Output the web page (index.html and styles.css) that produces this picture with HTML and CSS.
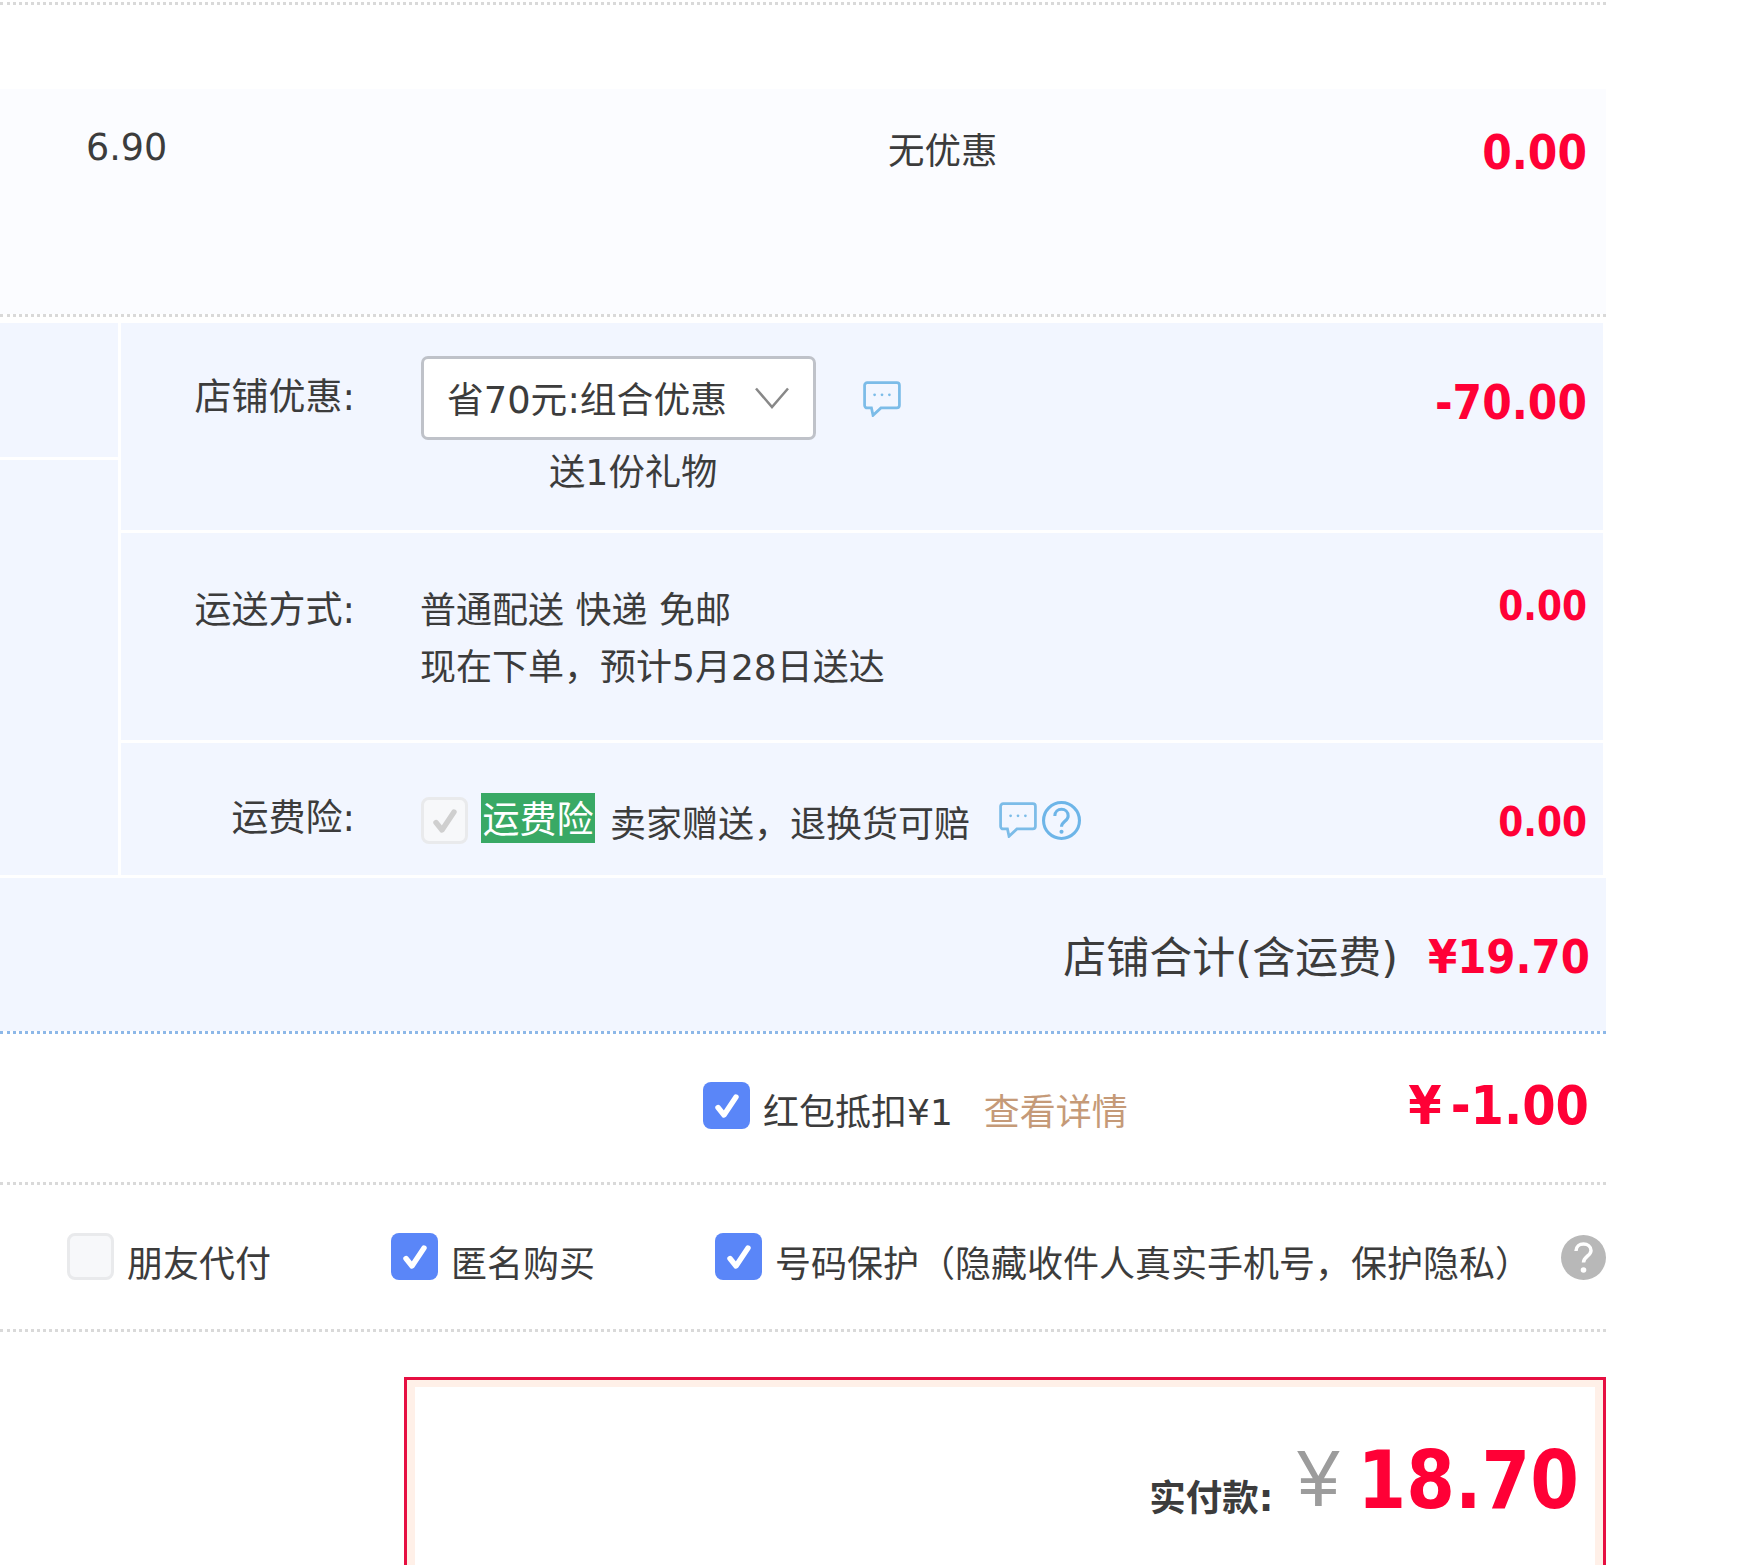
FILE: index.html
```html
<!DOCTYPE html>
<html lang="zh-CN">
<head>
<meta charset="utf-8">
<title>确认订单</title>
<link rel="stylesheet" href="styles.css">
</head>
<body>
<main class="order">
  <div class="rule rule-top"></div>
  <section class="item-row">
    <span class="unit-price">6.90</span>
    <span class="item-promo">无优惠</span>
    <span class="amount amount-lg item-amount">0.00</span>
  </section>
  <div class="rule rule-item"></div>

  <section class="store">
    <div class="store-side">
      <div class="side-a"></div>
      <div class="side-b"></div>
    </div>
    <div class="store-rows">
      <div class="srow srow-promo">
        <span class="label label-promo">店铺优惠:</span>
        <div class="promo-body">
          <div class="promo-top">
            <div class="select">
              <span class="select-text">省70元:组合优惠</span>
              <svg class="chevron" viewBox="0 0 34 22"><path d="M1 1.500 17 20 33 1.500"/></svg>
            </div>
            <svg class="chat chat-promo" viewBox="0 0 36 34"><use href="#chat"/></svg>
          </div>
          <div class="gift">送1份礼物</div>
        </div>
        <span class="amount amount-lg amount-promo">-70.00</span>
      </div>
      <div class="srow srow-ship">
        <span class="label">运送方式:</span>
        <div class="ship-body">
          <div>普通配送 快递 免邮</div>
          <div>现在下单，预计5月28日送达</div>
        </div>
        <span class="amount amount-ship">0.00</span>
      </div>
      <div class="srow srow-ins">
        <span class="label label-ins">运费险:</span>
        <div class="ins-body">
          <span class="check check-disabled">
            <svg viewBox="0 0 24 24"><path d="M6 13l4 5 8-12"/></svg>
          </span>
          <span class="badge">运费险</span>
          <span class="ins-text">卖家赠送，退换货可赔</span>
          <svg class="chat chat-ins" viewBox="0 0 36 34"><use href="#chat"/></svg>
          <svg class="help" viewBox="0 0 38 38">
            <circle cx="19" cy="19" r="17.500"/>
            <path d="M12.500 14.500C12.500 10.500 15.500 8 19 8s6.500 2.500 6.500 6.500c0 5-6.500 5.500-6.500 10.500"/>
            <circle class="help-dot" cx="19" cy="30" r="2"/>
          </svg>
        </div>
      </div>
    </div>
    <div class="ins-amount amount amount-ship">0.00</div>
  </section>

  <section class="store-total">
    <span class="total-label">店铺合计(含运费)</span>
    <span class="amount amount-total">¥19.70</span>
  </section>
  <div class="rule rule-blue"></div>

  <section class="coupon">
    <span class="check check-on">
      <svg viewBox="0 0 24 24"><path d="M6 13l4 5 8-12"/></svg>
    </span>
    <span class="coupon-text">红包抵扣¥1</span>
    <a class="detail-link">查看详情</a>
    <span class="amount amount-xl"><span class="yen">¥</span>-1.00</span>
  </section>
  <div class="rule"></div>

  <section class="options">
    <label class="opt opt-friend">
      <span class="check check-off"></span>
      <span class="opt-text">朋友代付</span>
    </label>
    <label class="opt opt-anon">
      <span class="check check-on"><svg viewBox="0 0 24 24"><path d="M6 13l4 5 8-12"/></svg></span>
      <span class="opt-text">匿名购买</span>
    </label>
    <label class="opt opt-phone">
      <span class="check check-on"><svg viewBox="0 0 24 24"><path d="M6 13l4 5 8-12"/></svg></span>
      <span class="opt-text">号码保护（隐藏收件人真实手机号，保护隐私）</span>
    </label>
    <svg class="q-icon" viewBox="0 0 45 45">
      <circle class="q-bg" cx="22.500" cy="22.500" r="22.500"/>
      <path class="q-mark" d="M15 16c0-4.500 3.500-7 7.500-7s7.500 2.500 7.500 6.500c0 5.500-7.500 6-7.500 12"/>
      <circle class="q-dot" cx="22.500" cy="35" r="2.800"/>
    </svg>
  </section>
  <div class="rule"></div>

  <section class="pay-wrap">
    <div class="pay-box">
      <div class="pay-inner">
        <span class="pay-label">实付款:</span>
        <span class="pay-currency">¥</span>
        <span class="pay-value">18.70</span>
      </div>
    </div>
  </section>
</main>
<svg class="defs" width="0" height="0">
  <symbol id="chat" viewBox="0 0 36 34">
    <path class="chat-line" d="M4 1.500h28a2.500 2.500 0 0 1 2.500 2.500v19a2.500 2.500 0 0 1-2.500 2.500H17l-7.500 7-1.500-7H4A2.500 2.500 0 0 1 1.500 23V4A2.500 2.500 0 0 1 4 1.500Z"/>
    <circle class="chat-dot" cx="11" cy="13" r="1.300"/>
    <circle class="chat-dot" cx="18" cy="13" r="1.300"/>
    <circle class="chat-dot" cx="25" cy="13" r="1.300"/>
  </symbol>
</svg>
</body>
</html>
```
FILE: styles.css
```css
* { box-sizing: border-box; }
html, body { margin: 0; padding: 0; background: #fff; }
body {
  height: 1565px;
  overflow: hidden;
  font-family: "DejaVu Sans", "Noto Sans CJK SC", sans-serif;
  font-size: 36px;
  color: #3c3c3c;
}
.order { width: 1606px; }
.defs { position: absolute; }

.rule { height: 3px; border-top: 3px dotted #d9d9d9; }
.rule-top { margin-top: 2px; }
.rule-blue { border-top-color: #8db8e8; }

.amount {
  display: inline-block;
  color: #ff0036;
  font-weight: 700;
  white-space: nowrap;
  transform: scaleY(1.12);
}
.amount-lg { font-size: 42.500px; line-height: 50px; }
.amount-total { font-size: 42px; line-height: 50px; }
.amount-xl { font-size: 48px; line-height: 60px; }
.amount-ship { font-size: 36px; line-height: 44px; }
.yen { margin-right: 9px; }

.item-row {
  margin-top: 84px;
  height: 225px;
  background: #fbfcff;
  display: flex;
  align-items: flex-start;
  padding: 0 19px 0 86px;
  font-size: 36.500px;
}
.unit-price { line-height: 50px; margin-top: 34px; width: 802px; }
.item-promo { line-height: 50px; margin-top: 38px; flex: 1; }
.item-amount { margin-top: 39px; }

.store {
  margin-top: 6px;
  display: grid;
  grid-template-columns: 118px 1fr;
  column-gap: 3px;
  width: 1603px;
  position: relative;
}
.store-side { display: flex; flex-direction: column; gap: 3px; }
.side-a { height: 134px; background: #f2f6ff; }
.side-b { flex: 1; background: #f2f6ff; }
.store-rows { display: flex; flex-direction: column; gap: 3px; }

.srow {
  display: flex;
  align-items: flex-start;
  background: #f2f6ff;
  padding-right: 16px;
}
.label {
  width: 234px;
  flex: none;
  text-align: right;
  line-height: 50px;
  font-size: 37px;
}
.srow-promo { height: 207px; padding-top: 33px; }
.label-promo { margin-top: 17px; }
.promo-body { margin-left: 66px; flex: 1; }
.promo-top { display: flex; align-items: flex-start; }
.select {
  width: 395px;
  height: 84px;
  background: #fff;
  border: 3px solid #bfc2c9;
  border-radius: 7px;
  display: flex;
  align-items: center;
  justify-content: space-between;
  padding: 0 24px 0 23px;
  line-height: 50px;
}
.select-text { margin-top: 5px; white-space: nowrap; font-size: 36.800px; }
.chevron { width: 34px; height: 22px; flex: none; }
.chevron path { fill: none; stroke: #888; stroke-width: 2.500; }
.chat { flex: none; }
.chat-promo { width: 38px; height: 36px; margin: 25px 0 0 47px; }
.gift { margin: 8px 0 0 128px; line-height: 50px; font-size: 36.300px; }
.amount-promo { margin-top: 22px; }

.srow-ship { height: 207px; padding-top: 49px; }
.srow-ship .label { line-height: 57px; }
.ship-body { margin-left: 65px; flex: 1; line-height: 57px; }
.srow-ship .amount-ship { margin-top: 3px; }

.srow-ins { height: 132px; }
.label-ins { margin-top: 51px; }
.ins-body { margin-left: 66px; display: flex; align-items: flex-start; }
.check {
  display: flex;
  align-items: center;
  justify-content: center;
  flex: none;
  width: 47px;
  height: 47px;
  border-radius: 8px;
}
.check svg { width: 36px; height: 36px; }
.check path { fill: none; stroke-linecap: round; stroke-linejoin: round; stroke-width: 3.600; }
.check-on { background: #5a86f8; }
.check-on path { stroke: #fff; }
.check-off { background: #f7f8fa; border: 3px solid #e9eaec; }
.check-disabled { background: #f7f8fa; border: 3px solid #e9eaec; margin-top: 54px; }
.check-disabled path { stroke: #cfcfcf; }
.badge {
  margin: 50px 0 0 13px;
  width: 114px;
  height: 50px;
  line-height: 50px;
  text-align: center;
  background: #39a965;
  color: #fff;
  padding-top: 3px;
  font-size: 37px;
}
.ins-text { margin: 57px 0 0 15px; line-height: 50px; white-space: nowrap; }
.chat-ins { width: 38px; height: 36px; margin: 59px 0 0 29px; }
.help { width: 39px; height: 39px; margin: 58px 0 0 5px; }
.help circle { fill: none; stroke: #6db5e8; stroke-width: 3; }
.help path { fill: none; stroke: #6db5e8; stroke-width: 3; }
.help .help-dot { fill: #6db5e8; stroke: none; }
.chat-line { fill: none; stroke: #7cbce8; stroke-width: 2.600; }
.chat-dot { fill: #7cbce8; }
.ins-amount { position: absolute; right: 16px; bottom: 30px; }

.store-total {
  margin-top: 3px;
  height: 153px;
  background: #f2f6ff;
  display: flex;
  justify-content: flex-end;
  align-items: flex-start;
  padding: 54px 16px 0 0;
}
.total-label { font-size: 43px; line-height: 50px; margin-right: 30px; padding-top: 1px; }

.coupon {
  height: 148px;
  display: flex;
  align-items: flex-start;
  padding: 48px 17px 0 703px;
}
.coupon-text { margin: 6px 0 0 13px; line-height: 50px; }
.detail-link { margin: 6px 0 0 31px; line-height: 50px; color: #c59a78; flex: 1; }
.coupon .amount-xl { margin-top: -7px; }

.options {
  height: 144px;
  display: flex;
  align-items: flex-start;
  padding: 48px 0 0 67px;
  position: relative;
}
.opt { display: flex; align-items: flex-start; flex: none; }
.opt-text { margin: 7px 0 0 13px; line-height: 50px; white-space: nowrap; }
.opt-friend { width: 324px; }
.opt-anon { width: 324px; }
.q-icon {
  position: absolute;
  right: 0;
  top: 50px;
  width: 45px;
  height: 45px;
}
.q-bg { fill: #b8b8b8; }
.q-mark { fill: none; stroke: #fff; stroke-width: 3.500; }
.q-dot { fill: #fff; }

.pay-wrap { padding: 45px 0 0 404px; }
.pay-box {
  height: 240px;
  border: 3px solid #e60f41;
  padding: 7px 8px;
  background: #fff0e8;
}
.pay-inner {
  height: 100%;
  background: #fff;
  display: flex;
  justify-content: flex-end;
  align-items: flex-start;
  padding: 53px 16px 0 0;
}
.pay-label { font-size: 36.500px; font-weight: 700; line-height: 50px; margin-top: 34px; margin-right: 24px; }
.pay-currency { font-family: "Liberation Sans", sans-serif; font-size: 76px; line-height: 80px; color: #9c9c9c; margin-right: 18px; transform: scaleY(1.06); margin-top: -2px; }
.pay-value { display: inline-block; font-size: 70px; line-height: 80px; font-weight: 700; color: #ff0036; transform: scaleY(1.15); }
```
